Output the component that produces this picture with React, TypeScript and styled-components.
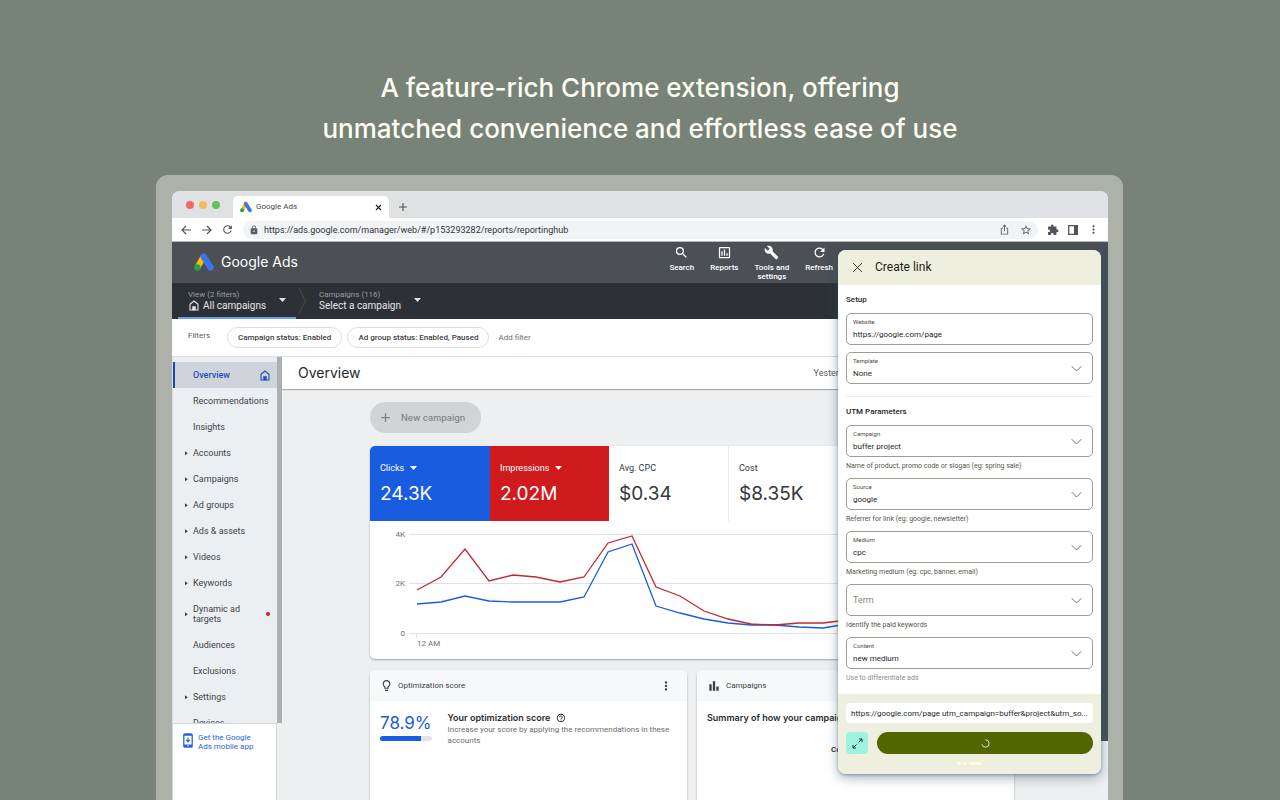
import React from "react";
import styled, { createGlobalStyle } from "styled-components";
import {
  MdAdd,
  MdBarChart,
  MdBuild,
  MdExtension,
  MdHelpOutline,
  MdIosShare,
  MdLightbulbOutline,
  MdLock,
  MdMoreVert,
  MdOutlineAssessment,
  MdRefresh,
  MdSearch,
  MdStarBorder,
} from "react-icons/md";

const GlobalStyle = createGlobalStyle`
  *, *::before, *::after { box-sizing: border-box; }
  body { margin: 0; font-family: Roboto, sans-serif; }
  h1, h2, h3, p, ul { margin: 0; padding: 0; font-weight: 400; }
  ul { list-style: none; }
  a { text-decoration: none; color: inherit; }
  button, input, select { font-family: inherit; margin: 0; padding: 0; border: 0; background: none; color: inherit; }
  svg { display: block; flex: none; }
`;

const display = `font-family: Inter, sans-serif;`;

const Page = styled.div`
  height: 100vh;
  overflow: hidden;
  display: flex;
  flex-direction: column;
  background: #778377;
`;

const Headline = styled.h1`
  padding: 67px 20px 26px;
  text-align: center;
  color: #fdfdf1;
  font-family: Inter, sans-serif;
  font-size: 26px;
  font-weight: 500;
  line-height: 41px;
`;

const Frame = styled.div`
  flex: 1;
  min-height: 0;
  margin: 0 157px 0 156px;
  padding: 16px 15px 0 16px;
  display: flex;
  border-radius: 12px 12px 0 0;
  background: #acb2aa;
`;

const Browser = styled.div`
  position: relative;
  flex: 1;
  min-width: 0;
  display: flex;
  flex-direction: column;
  overflow: hidden;
  border-radius: 8px 8px 0 0;
  background: #eeeff1;
`;

/* Browser chrome */

const TabStrip = styled.div`
  flex: none;
  height: 27px;
  display: flex;
  align-items: center;
  padding-left: 14px;
  background: #dfe1e5;
`;

const Lights = styled.div`
  display: flex;
  gap: 5px;
  margin-right: 13px;
`;

const Light = styled.span<{ $color: string }>`
  width: 8px;
  height: 8px;
  border-radius: 50%;
  background: ${(p) => p.$color};
`;

const Tab = styled.div`
  align-self: flex-end;
  width: 156px;
  height: 22px;
  display: flex;
  align-items: center;
  gap: 4px;
  padding: 0 7px 1px 7px;
  border-radius: 5px 5px 0 0;
  background: #fff;
  color: #45484c;
  font-size: 8px;
`;

const IconButton = styled.button`
  display: flex;
  align-items: center;
  justify-content: center;
  color: #505357;
`;

const TabClose = styled(IconButton)`
  margin-left: auto;
  padding-top: 1px;
  color: #222;
`;

const NewTab = styled(IconButton)`
  margin: 4px 0 0 10px;
`;

const AddressBar = styled.div`
  flex: none;
  height: 24px;
  display: flex;
  align-items: center;
  gap: 9px;
  padding: 0 8px 0 9px;
  background: #fff;
  border-bottom: 1px solid #b5b8ba;
`;

const Address = styled.label`
  flex: 1;
  height: 18px;
  display: flex;
  align-items: center;
  gap: 5px;
  padding: 0 6px;
  border-radius: 9px;
  background: #f1f3f5;
  color: #5a5d61;
`;

const AddressInput = styled.input`
  flex: 1;
  padding-top: 1px;
  font-size: 9px;
  line-height: 12px;
  color: #303236;
  outline: 0;
`;

const AddressActions = styled.span`
  display: flex;
  gap: 10px;
`;

/* Ads header */

const AppHeader = styled.header`
  flex: none;
  height: 41px;
  display: flex;
  justify-content: space-between;
  padding: 0 275px 0 22px;
  background: #4c4f54;
  color: #fff;
`;

const Brand = styled.a`
  display: flex;
  align-items: center;
  gap: 7px;
  padding-bottom: 2px;
  ${display}
  font-size: 14px;
`;

const Tools = styled.nav`
  display: flex;
  align-items: flex-start;
  gap: 16px;
  padding-top: 3px;
`;

const Tool = styled.button`
  display: flex;
  flex-direction: column;
  align-items: center;
  gap: 3px;
  font-size: 8px;
  line-height: 9px;
  font-weight: 500;
`;

const ScopeBar = styled.div`
  flex: none;
  height: 36px;
  display: flex;
  background: #2d3135;
`;

const Scope = styled.button<{ $active?: boolean }>`
  width: ${(p) => (p.$active ? 118 : 112)}px;
  margin-left: ${(p) => (p.$active ? 6 : 2)}px;
  display: flex;
  align-items: center;
  justify-content: space-between;
  padding: ${(p) => (p.$active ? "0 10px" : "0 0 0 10px")};
  border-bottom: 2px solid ${(p) => (p.$active ? "#6b9df5" : "transparent")};
  border-radius: 2px 2px 0 0;
  color: #e4e5e6;
  text-align: left;
`;

const ScopeHint = styled.span`
  display: block;
  font-size: 8px;
  line-height: 11px;
  color: #9a9c9f;
`;

const ScopeName = styled.span<{ $indent?: boolean }>`
  display: flex;
  align-items: center;
  gap: 4px;
  padding-left: ${(p) => (p.$indent ? 1 : 0)}px;
  font-size: 10px;
  line-height: 12px;
`;

const FilterBar = styled.div`
  flex: none;
  height: 38px;
  display: flex;
  align-items: center;
  gap: 5px;
  padding-left: 16px;
  background: #fff;
  border-bottom: 1px solid #dcdee0;
  font-size: 8px;
  color: #5b5e62;
`;

const FilterLabel = styled.span`
  width: 34px;
  padding-bottom: 4px;
`;

const Chip = styled.button`
  height: 21px;
  padding: 0 10px;
  border: 1px solid #dadce0;
  border-radius: 11px;
  font-size: 8px;
  font-weight: 500;
  color: #3c4043;
`;

const AddFilter = styled.button`
  margin-left: 4px;
  font-size: 8px;
  color: #6a6d71;
`;

/* Sidebar */

const Workspace = styled.div`
  flex: 1;
  min-height: 0;
  display: flex;
`;

const Side = styled.aside`
  flex: none;
  width: 110px;
  display: flex;
  flex-direction: column;
`;

const SideScroller = styled.div`
  flex: 1;
  min-height: 0;
  display: flex;
  border-right: 5px solid #adafb2;
`;

const SideList = styled.ul`
  flex: 1;
  overflow: hidden;
  padding-top: 5px;
  border-left: 1px solid #dcdfe1;
  background: #eceff1;
`;

const SideItem = styled.li`
  display: flex;
`;

const SideLink = styled.a<{ $active?: boolean }>`
  flex: 1;
  min-height: 26px;
  display: flex;
  align-items: center;
  padding: 0 7px 0 ${(p) => (p.$active ? 10 : 12)}px;
  border-left: ${(p) => (p.$active ? "2px solid #1a47b8" : "0")};
  background: ${(p) => (p.$active ? "#d0d3d9" : "transparent")};
  color: ${(p) => (p.$active ? "#1a4fc4" : "#3f4246")};
  font-size: 9px;
  line-height: 10px;
  font-weight: ${(p) => (p.$active ? 500 : 400)};
`;

const SideLabel = styled.span<{ $tall?: boolean }>`
  flex: 1;
  max-width: ${(p) => (p.$tall ? "56px" : "none")};
  padding: ${(p) => (p.$tall ? "8px 0" : "0")};
`;

const Caret = styled.span`
  width: 8px;
`;

const RedDot = styled.span`
  width: 4px;
  height: 4px;
  margin-left: auto;
  border-radius: 50%;
  background: #cc1a2b;
`;

const AppPromo = styled.a`
  flex: none;
  width: 105px;
  height: 77px;
  display: flex;
  align-items: flex-start;
  gap: 5px;
  padding: 9px 10px;
  border: solid #d5d8da;
  border-width: 1px 1px 0;
  background: #fff;
  color: #2a62d8;
  font-size: 8px;
  line-height: 9px;
`;

/* Main */

const Main = styled.main`
  flex: 1;
  min-width: 0;
  display: flex;
  flex-direction: column;
`;

const TitleBar = styled.div`
  flex: none;
  height: 32px;
  display: flex;
  align-items: center;
  justify-content: space-between;
  padding: 0 255px 1px 16px;
  background: #fff;
  box-shadow: 0 1px 1px #a9abae;
  font-size: 9px;
  color: #5b5e62;
`;

const Title = styled.h2`
  ${display}
  font-size: 14px;
  color: #25282b;
`;

const Content = styled.div`
  flex: 1;
  min-height: 0;
  display: flex;
  flex-direction: column;
  align-items: stretch;
  padding: 13px 94px 0 88px;
`;

const NewCampaign = styled.button`
  flex: none;
  align-self: flex-start;
  height: 31px;
  display: flex;
  align-items: center;
  gap: 8px;
  padding: 0 16px 0 8px;
  border-radius: 16px;
  background: #d2d3d5;
  color: #808285;
  ${display}
  font-size: 9px;
  font-weight: 500;
`;

const Card = styled.section`
  overflow: hidden;
  border-radius: 5px;
  background: #fff;
  box-shadow: 0 1px 2px rgba(60, 64, 67, 0.45);
`;

const ChartCard = styled(Card)`
  flex: none;
  height: 213px;
  margin: 13px 0 11px;
`;

const Metrics = styled.div`
  display: grid;
  grid-template-columns: 120px 119px 120px 119px 1fr;
  height: 75px;
  border-bottom: 1px solid #e4e6e8;
`;

const Metric = styled.button<{ $fill?: string }>`
  height: 75px;
  display: flex;
  flex-direction: column;
  align-items: flex-start;
  padding: 16px 10px 0;
  border-right: ${(p) => (p.$fill ? "0" : "1px solid #e8eaec")};
  background: ${(p) => p.$fill || "#fff"};
  color: ${(p) => (p.$fill ? "#fff" : "#34373a")};
`;

const MetricLabel = styled.span`
  display: flex;
  align-items: center;
  gap: 6px;
  font-size: 9px;
  line-height: 12px;
`;

const MetricValue = styled.span`
  margin-top: 7px;
  ${display}
  font-size: 19px;
  line-height: 26px;
`;

const AxisText = styled.text`
  font-size: 8px;
  fill: #6d7074;
`;

const CardRow = styled.div`
  flex: 1;
  min-height: 0;
  display: grid;
  grid-template-columns: 1fr 1fr;
  gap: 10px;
`;

const BottomCard = styled(Card)`
  border-radius: 5px 5px 0 0;
`;

const CardHead = styled.div`
  height: 31px;
  display: flex;
  align-items: center;
  gap: 5px;
  padding: 0 14px 0 10px;
  background: #f7f8fa;
  color: #3c4043;
  font-size: 8px;
`;

const CardMenu = styled(IconButton)`
  margin-left: auto;
  color: #3c4043;
`;

const ScoreBody = styled.div`
  display: flex;
  gap: 16px;
  padding: 10px 10px;
`;

const Score = styled.div`
  width: 52px;
  ${display}
  font-size: 17px;
  line-height: 24px;
  color: #1a5ce0;
`;

const ScoreTrack = styled.div`
  height: 5px;
  margin-top: 1px;
  border-radius: 3px;
  background: linear-gradient(to right, #1a5ce0 78%, #e1e3e8 78%);
`;

const CardTitle = styled.h3`
  display: flex;
  align-items: center;
  gap: 6px;
  ${display}
  font-size: 9px;
  line-height: 13px;
  font-weight: 600;
  color: #2a2d30;
`;

const CardText = styled.p`
  font-size: 8px;
  line-height: 11px;
  color: #6a6d71;
`;

const SummaryBody = styled.div`
  padding: 10px 10px;
  white-space: nowrap;
`;

const ColumnName = styled.p`
  margin: 20px 0 0 124px;
  font-size: 8px;
  line-height: 11px;
  font-weight: 700;
  color: #3c4043;
`;

/* Page scroll rail seen past the panel's right edge */
const Rail = styled.div`
  position: absolute;
  top: 51px;
  right: 0;
  width: 10px;
  height: 499px;
  background: #494f58;
`;

/* Extension panel */

const Panel = styled.form`
  position: absolute;
  top: 59px;
  right: 7px;
  width: 263px;
  overflow: hidden;
  border-radius: 8px;
  background: #fff;
  box-shadow: 0 4px 12px rgba(40, 80, 105, 0.42), 0 1px 3px rgba(40, 80, 105, 0.4);
  color: #25271f;
`;

const PanelHead = styled.div`
  height: 35px;
  display: flex;
  align-items: center;
  gap: 12px;
  padding: 0 0 1px 14px;
  background: #eeefdf;
`;

const PanelTitle = styled.h2`
  font-size: 12px;
  color: #1c1e16;
`;

const Group = styled.fieldset<{ $last?: boolean }>`
  min-width: 0;
  margin: 0 8px;
  padding: ${(p) => (p.$last ? "0 0 11px" : "0 0 12px")};
  border: 0;
  border-bottom: ${(p) => (p.$last ? "0" : "1px solid #eeefdf")};
`;

const GroupTitle = styled.legend`
  padding: 9px 0 7px;
  font-size: 8px;
  line-height: 12px;
  font-weight: 500;
`;

const Fields = styled.div<{ $gap: number }>`
  display: grid;
  gap: ${(p) => p.$gap}px;
`;

const FieldBox = styled.label`
  position: relative;
  height: 32px;
  display: block;
  border: 1px solid #9c9e93;
  border-radius: 5px;
`;

const FieldName = styled.span`
  position: absolute;
  top: 4px;
  left: 6px;
  font-size: 6px;
  line-height: 8px;
  color: #4b4d43;
`;

const fieldText = `
  width: 100%;
  height: 100%;
  padding: 11px 6px 0;
  font-size: 8px;
  line-height: 12px;
  outline: 0;
`;

const TextField = styled.input`
  ${fieldText}
`;

const SelectField = styled.select<{ $empty?: boolean }>`
  ${fieldText}
  appearance: none;
  ${(p) => (p.$empty ? "padding-top: 0; font-size: 9px; color: #85877c;" : "")}
`;

const FieldArrow = styled.svg`
  position: absolute;
  top: 12px;
  right: 10px;
`;

const Helper = styled.p<{ $faded?: boolean }>`
  padding-top: 5px;
  font-size: 7px;
  line-height: 9px;
  color: ${(p) => (p.$faded ? "#8b8d84" : "#54564c")};
`;

const PanelFoot = styled.div`
  padding: 9px 8px 8px;
  background: #eeefdf;
`;

const UrlPreview = styled.input`
  display: block;
  width: 100%;
  height: 20px;
  padding: 0 5px;
  border-radius: 4px;
  background: #fff;
  font-size: 8px;
  outline: 0;
`;

const FootActions = styled.div`
  display: flex;
  gap: 9px;
  margin: 9px 0 8px;
`;

const Expand = styled.button`
  width: 22px;
  height: 22px;
  display: grid;
  place-items: center;
  border-radius: 4px;
  background: #9ff2e0;
`;

const Submit = styled.button`
  flex: 1;
  height: 22px;
  display: grid;
  place-items: center;
  border-radius: 11px;
  background: #516600;
`;

const Dots = styled.div`
  display: flex;
  justify-content: center;
  gap: 2px;
  padding-bottom: 1px;
`;

const Dot = styled.span<{ $wide?: boolean }>`
  width: ${(p) => (p.$wide ? 13 : 4)}px;
  height: 3px;
  border-radius: 2px;
  background: #fdfed8;
`;

const AdsLogo = ({ size }: { size: number }) => (
  <svg width={size} height={size} viewBox="0 0 58 58" aria-hidden="true">
    <path d="M28 13 10 45" stroke="#fbbc04" strokeWidth="17" />
    <path d="M28 13 48 45" stroke="#3a74f0" strokeWidth="18" strokeLinecap="round" />
    <circle cx="10" cy="45" r="9.5" fill="#2f9e4c" />
  </svg>
);

const DropArrow = () => (
  <svg width="7" height="4" viewBox="0 0 7 4" aria-hidden="true">
    <path d="M0 0h7L3.500 4z" fill="currentColor" />
  </svg>
);

const HomeIcon = () => (
  <svg width="10" height="11" viewBox="0 0 10 11" fill="none" stroke="currentColor" aria-hidden="true">
    <path d="M1 4.200 5 1l4 3.200V10H1z" strokeWidth="1.100" strokeLinejoin="round" />
    <path d="M3.500 10V6.500h3V10z" fill="currentColor" strokeWidth="0.500" />
  </svg>
);

const Chevron = () => (
  <FieldArrow width="11" height="8" viewBox="0 0 11 8" fill="none" aria-hidden="true">
    <path d="M.7 1.200 5.500 6 10.300 1.200" stroke="#5d5f55" strokeWidth="0.900" />
  </FieldArrow>
);

const BackIcon = ({ forward }: { forward?: boolean }) => (
  <svg width="11" height="10" viewBox="0 0 11 10" fill="none" stroke="currentColor" aria-hidden="true">
    <path d={forward ? "M1 5h9M6 1l4 4-4 4" : "M10 5H1M5 1 1 5l4 4"} strokeWidth="1.100" />
  </svg>
);

const SidePanelIcon = () => (
  <svg width="10" height="10" viewBox="0 0 10 10" aria-hidden="true">
    <path d="M.7.7h8.600v8.600H.7z" fill="none" stroke="currentColor" strokeWidth="1.300" />
    <path d="M6 .5h3.500v9H6z" fill="currentColor" />
  </svg>
);

const PhoneIcon = () => (
  <svg width="10" height="15" viewBox="0 0 10 15" aria-hidden="true">
    <rect x=".8" y=".8" width="8.400" height="13.400" rx="1.200" fill="none" stroke="currentColor" strokeWidth="1.300" />
    <path d="M1 1h8v1.700H1zM1 11.500h8V14H1z" fill="currentColor" />
    <path d="M5 4.500v4M3.200 6.800 5 8.800l1.800-2" stroke="currentColor" strokeWidth="1.200" fill="none" />
    <path d="M4 12.700h2" stroke="#fff" strokeWidth="0.700" />
  </svg>
);

const times = Array.from({ length: 19 }, (_, i) => 47 + i * 24 - Math.round(i / 9));
const impressions = [69, 56, 28, 60, 54, 56, 61, 56, 22, 15, 66, 75, 90, 98, 103, 104, 102, 102, 99];
const clicks = [83, 81, 75, 80, 81, 81, 81, 76, 31, 23, 85, 92, 98, 102, 104, 104, 106, 107, 103];
const line = (values: number[]) => values.map((v, i) => `${times[i]},${v}`).join(" ");

const sideItems: { name: string; more?: boolean; active?: boolean; alert?: boolean }[] = [
  { name: "Overview", active: true },
  { name: "Recommendations" },
  { name: "Insights" },
  { name: "Accounts", more: true },
  { name: "Campaigns", more: true },
  { name: "Ad groups", more: true },
  { name: "Ads & assets", more: true },
  { name: "Videos", more: true },
  { name: "Keywords", more: true },
  { name: "Dynamic ad targets", more: true, alert: true },
  { name: "Audiences" },
  { name: "Exclusions" },
  { name: "Settings", more: true },
  { name: "Devices" },
];

const utmFields = [
  { name: "Campaign", value: "buffer project", help: "Name of product, promo code or slogan (eg: spring sale)" },
  { name: "Source", value: "google", help: "Referrer for link (eg: google, newsletter)" },
  { name: "Medium", value: "cpc", help: "Marketing medium (eg: cpc, banner, email)" },
  { name: "Term", value: "", help: "Identify the paid keywords" },
  { name: "Content", value: "new medium", help: "Use to differentiate ads" },
];

const Picker = ({ name, value }: { name: string; value: string }) => (
  <FieldBox>
    {value && <FieldName>{name}</FieldName>}
    <SelectField $empty={!value} aria-label={name} defaultValue={value}>
      <option value={value}>{value || name}</option>
    </SelectField>
    <Chevron />
  </FieldBox>
);

export default function App() {
  return (
    <Page>
      <GlobalStyle />
      <Headline>
        A feature-rich Chrome extension, offering
        <br />
        unmatched convenience and effortless ease of use
      </Headline>
      <Frame>
        <Browser>
          <TabStrip>
            <Lights>
              <Light $color="#ee6a5f" />
              <Light $color="#f5bd4f" />
              <Light $color="#61c454" />
            </Lights>
            <Tab>
              <AdsLogo size={12} />
              Google Ads
              <TabClose aria-label="Close tab">
                <svg width="7" height="7" viewBox="0 0 7 7" aria-hidden="true">
                  <path d="m1 1 5 5M6 1 1 6" stroke="currentColor" strokeWidth="1.100" />
                </svg>
              </TabClose>
            </Tab>
            <NewTab aria-label="New tab">
              <svg width="8" height="8" viewBox="0 0 8 8" aria-hidden="true">
                <path d="M4 0v8M0 4h8" stroke="currentColor" strokeWidth="1.100" />
              </svg>
            </NewTab>
          </TabStrip>
          <AddressBar>
            <IconButton aria-label="Back">
              <BackIcon />
            </IconButton>
            <IconButton aria-label="Forward">
              <BackIcon forward />
            </IconButton>
            <IconButton aria-label="Reload">
              <MdRefresh size={13} />
            </IconButton>
            <Address>
              <MdLock size={10} />
              <AddressInput
                aria-label="Address"
                readOnly
                value="https://ads.google.com/manager/web/#/p153293282/reports/reportinghub"
              />
              <AddressActions>
                <MdIosShare size={11} />
                <MdStarBorder size={12} />
              </AddressActions>
            </Address>
            <IconButton aria-label="Extensions">
              <MdExtension size={12} />
            </IconButton>
            <IconButton aria-label="Side panel">
              <SidePanelIcon />
            </IconButton>
            <IconButton aria-label="Browser menu">
              <MdMoreVert size={13} />
            </IconButton>
          </AddressBar>

          <AppHeader>
            <Brand href="#">
              <AdsLogo size={20} />
              Google Ads
            </Brand>
            <Tools>
              <Tool>
                <MdSearch size={15} />
                Search
              </Tool>
              <Tool>
                <MdOutlineAssessment size={15} />
                Reports
              </Tool>
              <Tool>
                <MdBuild size={15} />
                <span>
                  Tools and
                  <br />
                  settings
                </span>
              </Tool>
              <Tool>
                <MdRefresh size={15} />
                Refresh
              </Tool>
            </Tools>
          </AppHeader>

          <ScopeBar>
            <Scope $active>
              <span>
                <ScopeHint>View (2 filters)</ScopeHint>
                <ScopeName $indent>
                  <HomeIcon />
                  All campaigns
                </ScopeName>
              </span>
              <DropArrow />
            </Scope>
            <svg width="11" height="36" viewBox="0 0 11 36" fill="none" aria-hidden="true">
              <path d="M3 5.500 9.500 18 3 30.500" stroke="#4a4d51" />
            </svg>
            <Scope>
              <span>
                <ScopeHint>Campaigns (116)</ScopeHint>
                <ScopeName>Select a campaign</ScopeName>
              </span>
              <DropArrow />
            </Scope>
          </ScopeBar>

          <FilterBar>
            <FilterLabel>Filters</FilterLabel>
            <Chip>Campaign status: Enabled</Chip>
            <Chip>Ad group status: Enabled, Paused</Chip>
            <AddFilter>Add filter</AddFilter>
          </FilterBar>

          <Workspace>
            <Side>
              <SideScroller>
                <SideList>
                  {sideItems.map((item) => (
                    <SideItem key={item.name}>
                      <SideLink href="#" $active={item.active}>
                        <Caret>
                          {item.more && (
                            <svg width="3" height="5" viewBox="0 0 3 5" aria-hidden="true">
                              <path d="M0 .3v4L2.800 2.300z" fill="#3f4246" />
                            </svg>
                          )}
                        </Caret>
                        <SideLabel $tall={item.alert}>{item.name}</SideLabel>
                        {item.active && <HomeIcon />}
                        {item.alert && <RedDot />}
                      </SideLink>
                    </SideItem>
                  ))}
                </SideList>
              </SideScroller>
              <AppPromo href="#">
                <PhoneIcon />
                <span>
                  Get the Google
                  <br />
                  Ads mobile app
                </span>
              </AppPromo>
            </Side>

            <Main>
              <TitleBar>
                <Title>Overview</Title>
                <span>Yesterday</span>
              </TitleBar>
              <Content>
                <NewCampaign>
                  <MdAdd size={15} />
                  New campaign
                </NewCampaign>

                <ChartCard>
                  <Metrics>
                    <Metric $fill="#1a5ce0">
                      <MetricLabel>
                        Clicks <DropArrow />
                      </MetricLabel>
                      <MetricValue>24.3K</MetricValue>
                    </Metric>
                    <Metric $fill="#cf1b1e">
                      <MetricLabel>
                        Impressions <DropArrow />
                      </MetricLabel>
                      <MetricValue>2.02M</MetricValue>
                    </Metric>
                    <Metric>
                      <MetricLabel>Avg. CPC</MetricLabel>
                      <MetricValue>$0.34</MetricValue>
                    </Metric>
                    <Metric>
                      <MetricLabel>Cost</MetricLabel>
                      <MetricValue>$8.35K</MetricValue>
                    </Metric>
                  </Metrics>
                  <svg width="644" height="138" viewBox="0 0 644 138" fill="none" role="img" aria-label="Clicks and impressions by hour">
                    <path d="M39 13.500h605M39 62.500h605M39 112.500h605M46.500 112.500v4" stroke="#dfe1e3" />
                    <AxisText x="35" y="16" textAnchor="end">4K</AxisText>
                    <AxisText x="35" y="65" textAnchor="end">2K</AxisText>
                    <AxisText x="35" y="115" textAnchor="end">0</AxisText>
                    <AxisText x="47" y="125">12 AM</AxisText>
                    <polyline points={line(clicks)} stroke="#1a5ce0" strokeWidth="1.300" />
                    <polyline points={line(impressions)} stroke="#c5282c" strokeWidth="1.300" />
                  </svg>
                </ChartCard>

                <CardRow>
                  <BottomCard>
                    <CardHead>
                      <MdLightbulbOutline size={13} />
                      Optimization score
                      <CardMenu aria-label="Card menu">
                        <MdMoreVert size={14} />
                      </CardMenu>
                    </CardHead>
                    <ScoreBody>
                      <Score>
                        78.9%
                        <ScoreTrack />
                      </Score>
                      <div>
                        <CardTitle>
                          Your optimization score
                          <MdHelpOutline size={10} />
                        </CardTitle>
                        <CardText>
                          Increase your score by applying the recommendations in these accounts
                        </CardText>
                      </div>
                    </ScoreBody>
                  </BottomCard>
                  <BottomCard>
                    <CardHead>
                      <MdBarChart size={14} />
                      Campaigns
                    </CardHead>
                    <SummaryBody>
                      <CardTitle>Summary of how your campaigns are performing</CardTitle>
                      <ColumnName>Cost</ColumnName>
                    </SummaryBody>
                  </BottomCard>
                </CardRow>
              </Content>
            </Main>
          </Workspace>

          <Rail />

          <Panel onSubmit={(e) => e.preventDefault()}>
            <PanelHead>
              <IconButton type="button" aria-label="Close">
                <svg width="11" height="11" viewBox="0 0 11 11" aria-hidden="true">
                  <path d="m1 1 9 9M10 1l-9 9" stroke="#25271f" strokeWidth="0.900" />
                </svg>
              </IconButton>
              <PanelTitle>Create link</PanelTitle>
            </PanelHead>
            <Group>
              <GroupTitle>Setup</GroupTitle>
              <Fields $gap={7}>
                <FieldBox>
                  <FieldName>Website</FieldName>
                  <TextField defaultValue="https://google.com/page" />
                </FieldBox>
                <Picker name="Template" value="None" />
              </Fields>
            </Group>
            <Group $last>
              <GroupTitle>UTM Parameters</GroupTitle>
              <Fields $gap={7}>
                {utmFields.map((f) => (
                  <div key={f.name}>
                    <Picker name={f.name} value={f.value} />
                    <Helper $faded={f.name === "Content"}>{f.help}</Helper>
                  </div>
                ))}
              </Fields>
            </Group>
            <PanelFoot>
              <UrlPreview
                aria-label="Link preview"
                readOnly
                value="https://google.com/page utm_campaign=buffer&project&utm_so..."
              />
              <FootActions>
                <Expand type="button" aria-label="Expand">
                  <svg width="11" height="11" viewBox="0 0 11 11" fill="none" stroke="#12352e" aria-hidden="true">
                    <path d="M6.500 4.500 10 1M7 1h3v3M4.500 6.500 1 10M1 7v3h3" strokeWidth="1" />
                  </svg>
                </Expand>
                <Submit aria-label="Creating link">
                  <svg width="9" height="9" viewBox="0 0 9 9" fill="none" aria-hidden="true">
                    <path d="M4.500 .8a3.700 3.700 0 1 1-3.600 4.500" stroke="#eef3cf" strokeWidth="0.900" />
                  </svg>
                </Submit>
              </FootActions>
              <Dots>
                <Dot />
                <Dot />
                <Dot $wide />
              </Dots>
            </PanelFoot>
          </Panel>
        </Browser>
      </Frame>
    </Page>
  );
}
